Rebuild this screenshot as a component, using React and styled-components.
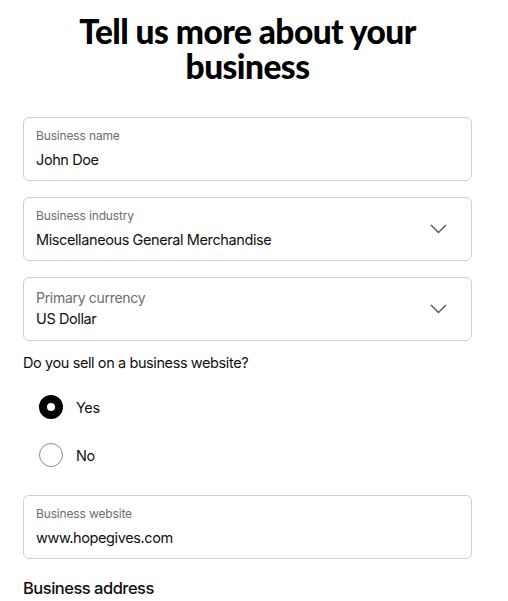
import styled, { createGlobalStyle } from "styled-components";

const GlobalStyle = createGlobalStyle`
	body {
		margin: 0;
		background: #fff;
		font-family: Inter, "Liberation Sans", sans-serif;
		color: #101010;
	}
`;

const fields = [
	{ label: "Business name", value: "John Doe" },
	{ label: "Business industry", value: "Miscellaneous General Merchandise", select: true },
	{ label: "Primary currency", value: "US Dollar", select: true, large: true },
];

const Chevron = () => (
	<svg width="17" height="10" viewBox="0 0 17 10" fill="none">
		<polyline points="1,1 8.5,8.5 16,1" stroke="#555" strokeWidth="1.4" />
	</svg>
);

const Field = ({ label, value, select, large }) => (
	<FieldBox>
		<FieldText $large={large}>
			<Label $large={large}>{label}</Label>
			<Value>{value}</Value>
		</FieldText>
		{select && <Chevron />}
	</FieldBox>
);

const App = () => {
	return (
		<>
			<GlobalStyle />
			<Page>
				<Title>
					Tell us more about your
					<br />
					business
				</Title>
				<Form>
					{fields.map(f => (
						<Field key={f.label} {...f} />
					))}
					<Question>Do you sell on a business website?</Question>
					<Radios>
						<RadioRow>
							<Radio $checked />
							<span>Yes</span>
						</RadioRow>
						<RadioRow>
							<Radio />
							<span>No</span>
						</RadioRow>
					</Radios>
					<Field label="Business website" value="www.hopegives.com" />
					<Section>Business address</Section>
				</Form>
			</Page>
		</>
	);
};

export default App;

const Page = styled.div`
	width: 449px;
	margin: 0 0 0 23px;
	padding-top: 14px;
`;

const Title = styled.h1`
	margin: 0;
	text-align: center;
	font-family: Lato, "Noto Sans", sans-serif;
	font-weight: 900;
	font-size: 33.5px;
	line-height: 35px;
	letter-spacing: -0.55px;
	color: #000;
`;

const Form = styled.div`
	display: flex;
	flex-direction: column;
	gap: 16px;
	margin-top: 33px;
`;

const FieldBox = styled.div`
	box-sizing: border-box;
	height: 64px;
	border: 1px solid #cfcfcf;
	border-radius: 6px;
	padding: 0 24px 0 12px;
	display: flex;
	align-items: center;
	justify-content: space-between;
`;

const FieldText = styled.div`
	display: flex;
	flex-direction: column;
	gap: ${p => (p.$large ? "2px" : "5px")};
	margin-top: ${p => (p.$large ? "0" : "-1px")};
`;

const Label = styled.div`
	font-size: ${p => (p.$large ? "14px" : "12px")};
	line-height: 18px;
	letter-spacing: ${p => (p.$large ? "-0.3px" : "-0.15px")};
	color: #6d6d6d;
`;

const Value = styled.div`
	font-size: 14.5px;
	line-height: 20px;
	letter-spacing: -0.4px;
	color: #101010;
`;

const Question = styled.div`
	font-size: 14.5px;
	line-height: 20px;
	letter-spacing: -0.4px;
	margin-top: -4px;
`;

const Radios = styled.div`
	display: flex;
	flex-direction: column;
	margin-top: -6px;
`;

const RadioRow = styled.div`
	height: 48px;
	display: flex;
	align-items: center;
	gap: 13px;
	padding-left: 16px;
	font-size: 14.5px;
	letter-spacing: -0.4px;
`;

const Radio = styled.span`
	box-sizing: border-box;
	width: 24px;
	height: 24px;
	border-radius: 50%;
	border: ${p => (p.$checked ? "8px solid #000" : "1px solid #8a8a8a")};
	background: #fff;
`;

const Section = styled.div`
	font-size: 16.5px;
	font-weight: 500;
	line-height: 24px;
	letter-spacing: -0.5px;
	margin-top: 1px;
`;
